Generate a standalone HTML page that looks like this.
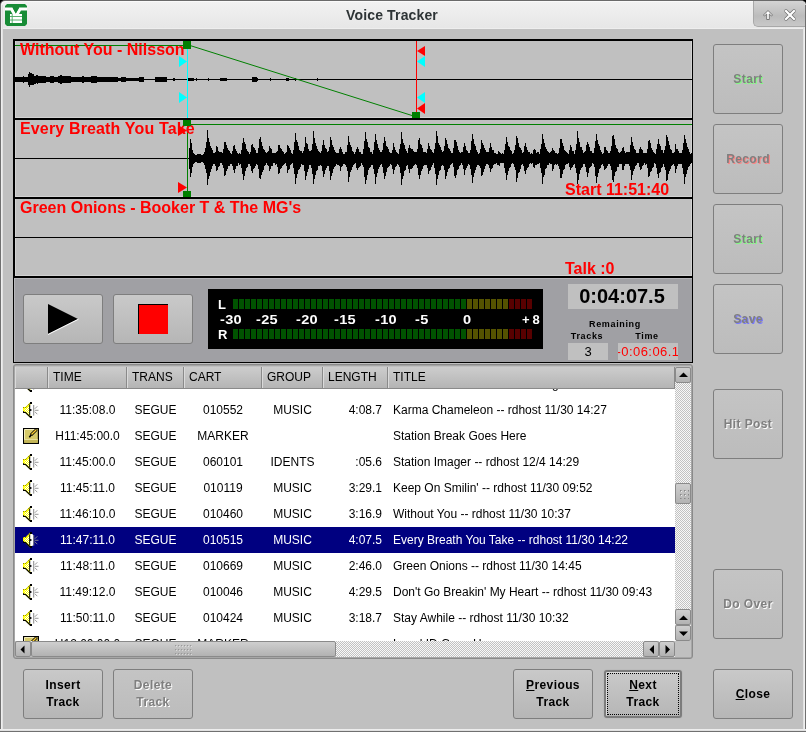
<!DOCTYPE html>
<html><head><meta charset="utf-8">
<style>
*{box-sizing:border-box;margin:0;padding:0}
html,body{width:806px;height:732px;overflow:hidden}
body{position:relative;background:#c0c0c0;font-family:"Liberation Sans",sans-serif;color:#000}
.a{position:absolute}
/* window frame */
#tb{left:0;top:0;width:806px;height:29px;background:linear-gradient(#f2f2f2,#e6e6e6);border-top:1px solid #6a6a6a;border-left:1px solid #707070;border-top-left-radius:5px;border-top-right-radius:5px;box-shadow:inset 1px 1px 0 #fafafa}
#tbl{left:0;top:28px;width:806px;height:1px;background:#eeeeee}
#fl{left:0;top:5px;width:1px;height:732px;background:#707070}
#fl2{left:1px;top:5px;width:2px;height:726px;background:linear-gradient(90deg,#f4f4f4,#dcdcdc)}
#fr{left:805px;top:5px;width:1px;height:732px;background:#707070}
#fr2{left:803px;top:27px;width:2px;height:704px;background:linear-gradient(90deg,#dcdcdc,#f4f4f4)}
#fb{left:0;top:729px;width:806px;height:3px;background:linear-gradient(#f4f4f4,#dcdcdc 60%,#707070 60%)}
#title{left:346px;top:7px;text-align:left;white-space:nowrap;font-weight:bold;font-size:14px;color:#2e3436;letter-spacing:0.15px}
#tab{left:753px;top:1px;width:52px;height:26px;background:linear-gradient(#d4d4d4,#bcbcbc 60%,#c8c8c8);border-bottom-left-radius:5px;border-top-right-radius:4px;border-left:1px solid #a8a8a8;border-bottom:1px solid #a8a8a8}
/* buttons */
.btn{position:absolute;border:1px solid #7e7e7e;border-radius:3px;background:linear-gradient(#c9c9c9,#b6b6b6);font-weight:bold;font-size:12px;text-align:center;color:#000;letter-spacing:0.4px}
.dis{background:linear-gradient(#c4c4c4,#bcbcbc);color:#7f7f7f;letter-spacing:0.4px}
.bl{position:absolute;left:0;width:100%;text-align:center}
.wt{font-weight:bold;font-size:16px;line-height:16px;color:#ff0000;white-space:nowrap}
.mt{color:#fff;font-size:13px;line-height:13px;font-weight:bold;white-space:nowrap;letter-spacing:0}
.mt2{letter-spacing:0.3px;transform:scaleX(1.12);transform-origin:0 0}
.sm{font-size:9px;font-weight:bold;line-height:11px;white-space:nowrap;letter-spacing:0.65px}
.row{position:absolute;left:0;width:660px;height:26px;font-size:12px;line-height:26px;white-space:nowrap}
.row .c{top:0;height:26px;white-space:nowrap;text-align:center}
.sel{background:#000080;color:#fff}
.hd{background:linear-gradient(#cdcdcd,#b3b3b3);border-right:1px solid #8a8a8a;border-left:1px solid #dadada;font-size:12px;line-height:21px;padding-left:4px;white-space:nowrap}
.sb{border:1px solid #8a8a8a;border-radius:2px;background:linear-gradient(#cfcfcf,#b2b2b2)}
.chk{background-color:#e6e6e6;background-image:repeating-conic-gradient(#c2c2c2 0 25%,#f8f8f8 0 50%);background-size:2px 2px}
body *{will-change:transform}
</style></head><body>
<div class="a" style="left:0;top:0;width:5px;height:5px;background:#000"></div><div class="a" style="left:801px;top:0;width:5px;height:5px;background:#000"></div>
<div id="tb" class="a"></div>
<div id="tbl" class="a"></div>
<div id="fl" class="a"></div><div id="fl2" class="a"></div>
<div id="fr" class="a"></div><div id="fr2" class="a"></div>
<div id="fb" class="a"></div>
<div id="title" class="a">Voice Tracker</div>
<div id="tab" class="a"></div>
<svg class="a" style="left:4px;top:3px" width="24" height="24" viewBox="0 0 24 24">
<path d="M3,1H21L23,3V21L21,23H3L1,21V3Z" fill="#188c36"/>
<path d="M1,4.5H8.5L11.8,10.5L15.2,4.5H23V7.5H17L13.5,13.5H10L6.5,7.5H1Z" fill="#fff"/>
<rect x="6" y="11" width="12" height="9" fill="#fff"/>
<path d="M6,13.5H18M6,17H18M8.2,11V20" stroke="#4aa862" stroke-width="0.9"/>
<path d="M8.5,4.5H15.2L11.8,10.5Z" fill="#188c36"/>
</svg>
<svg class="a" style="left:762px;top:9px" width="12" height="12" viewBox="0 0 12 12">
<path d="M6,1.5L10.5,6L9.5,7L7.3,5V10.5H4.7V5L2.5,7L1.5,6Z" fill="#fff" stroke="#6a6a6a" stroke-width="0.9" stroke-linejoin="round"/>
</svg>
<svg class="a" style="left:783px;top:8px" width="14" height="14" viewBox="0 0 14 14">
<path d="M3,3L11,11M11,3L3,11" stroke="#707070" stroke-width="3.6" stroke-linecap="round"/>
<path d="M3,3L11,11M11,3L3,11" stroke="#fff" stroke-width="2.2" stroke-linecap="square"/>
</svg>

<!--WAVE-->
<div class="a" style="left:13px;top:39px;width:680px;height:239px;background:#000"></div>
<div class="a" style="left:15px;top:41px;width:677px;height:77px;background:#c0c0c0;border-left:1px solid #d2d2d2;border-bottom:1px solid #d2d2d2;border-right:1px solid #d2d2d2"></div>
<div class="a" style="left:15px;top:120px;width:677px;height:77px;background:#c0c0c0;border-left:1px solid #d2d2d2;border-bottom:1px solid #d2d2d2;border-right:1px solid #d2d2d2"></div>
<div class="a" style="left:15px;top:199px;width:677px;height:77px;background:#c0c0c0;border-left:1px solid #d2d2d2;border-bottom:1px solid #d2d2d2;border-right:1px solid #d2d2d2"></div>
<svg class="a" style="left:0;top:0" width="806" height="280" viewBox="0 0 806 280" shape-rendering="crispEdges">
<g fill="#000">
<rect x="15" y="79" width="677" height="1"/>
<rect x="15" y="158" width="677" height="1"/>
<rect x="15" y="237" width="677" height="1"/>
<path d="M15,77h1v5h-1ZM16,77h1v5h-1ZM17,77h1v5h-1ZM18,77h1v5h-1ZM19,77h1v5h-1ZM20,77h1v5h-1ZM21,77h1v5h-1ZM22,77h1v5h-1ZM23,76h1v7h-1ZM24,77h1v5h-1ZM25,77h1v5h-1ZM26,77h1v5h-1ZM27,77h1v5h-1ZM28,74h1v11h-1ZM29,72h1v15h-1ZM30,73h1v12h-1ZM31,73h1v12h-1ZM32,74h1v11h-1ZM33,74h1v11h-1ZM34,76h1v8h-1ZM35,76h1v8h-1ZM36,75h1v8h-1ZM37,75h1v9h-1ZM38,76h1v7h-1ZM39,76h1v7h-1ZM40,76h1v7h-1ZM41,76h1v7h-1ZM42,76h1v7h-1ZM43,76h1v7h-1ZM44,76h1v7h-1ZM45,76h1v7h-1ZM46,77h1v5h-1ZM47,77h1v5h-1ZM48,77h1v5h-1ZM49,77h1v5h-1ZM50,76h1v7h-1ZM51,76h1v7h-1ZM52,76h1v7h-1ZM53,76h1v7h-1ZM54,77h1v5h-1ZM55,77h1v5h-1ZM56,77h1v5h-1ZM57,77h1v5h-1ZM58,76h1v7h-1ZM59,76h1v7h-1ZM60,75h1v9h-1ZM61,75h1v9h-1ZM62,76h1v7h-1ZM63,76h1v7h-1ZM64,76h1v7h-1ZM65,76h1v7h-1ZM66,76h1v7h-1ZM67,76h1v7h-1ZM68,76h1v7h-1ZM69,76h1v7h-1ZM70,76h1v7h-1ZM71,77h1v5h-1ZM72,77h1v5h-1ZM73,77h1v5h-1ZM74,77h1v5h-1ZM75,77h1v5h-1ZM76,77h1v5h-1ZM77,77h1v5h-1ZM78,77h1v5h-1ZM79,77h1v5h-1ZM80,77h1v5h-1ZM81,77h1v5h-1ZM82,76h1v7h-1ZM83,76h1v7h-1ZM84,77h1v5h-1ZM85,77h1v5h-1ZM86,77h1v5h-1ZM87,77h1v5h-1ZM88,77h1v5h-1ZM89,77h1v5h-1ZM90,77h1v5h-1ZM91,76h1v7h-1ZM92,76h1v7h-1ZM93,76h1v7h-1ZM94,76h1v7h-1ZM95,76h1v7h-1ZM96,76h1v7h-1ZM97,77h1v5h-1ZM98,77h1v5h-1ZM99,77h1v5h-1ZM100,77h1v5h-1ZM101,77h1v5h-1ZM102,77h1v5h-1ZM103,77h1v5h-1ZM104,77h1v5h-1ZM105,77h1v5h-1ZM106,77h1v5h-1ZM107,77h1v5h-1ZM108,77h1v5h-1ZM109,77h1v5h-1ZM110,77h1v5h-1ZM111,77h1v5h-1ZM112,77h1v5h-1ZM113,77h1v5h-1ZM114,77h1v5h-1ZM115,77h1v5h-1ZM116,77h1v5h-1ZM117,77h1v5h-1ZM118,78h1v3h-1ZM119,78h1v3h-1ZM120,78h1v3h-1ZM121,77h1v5h-1ZM122,77h1v5h-1ZM123,77h1v5h-1ZM124,77h1v5h-1ZM125,77h1v5h-1ZM126,78h1v3h-1ZM127,78h1v3h-1ZM128,78h1v3h-1ZM129,78h1v3h-1ZM130,78h1v3h-1ZM131,78h1v3h-1ZM132,78h1v3h-1ZM133,78h1v3h-1ZM134,78h1v3h-1ZM135,78h1v3h-1ZM136,78h1v3h-1ZM137,78h1v3h-1ZM138,78h1v3h-1ZM139,77h1v5h-1ZM140,77h1v5h-1ZM141,77h1v5h-1ZM142,77h1v5h-1ZM143,77h1v5h-1ZM155,77h1v5h-1ZM156,77h1v5h-1ZM157,77h1v5h-1ZM158,77h1v5h-1ZM159,77h1v5h-1ZM160,77h1v5h-1ZM161,77h1v5h-1ZM162,77h1v5h-1ZM163,77h1v5h-1ZM164,77h1v5h-1ZM165,77h1v5h-1ZM166,77h1v5h-1ZM173,78h1v3h-1ZM174,78h1v3h-1ZM187,78h1v3h-1ZM188,78h1v3h-1ZM189,78h1v3h-1ZM190,78h1v3h-1ZM191,78h1v3h-1ZM192,78h1v3h-1ZM193,78h1v3h-1ZM196,78h1v3h-1ZM208,78h1v3h-1ZM220,78h1v3h-1ZM221,78h1v3h-1ZM222,78h1v3h-1ZM223,78h1v3h-1ZM224,78h1v3h-1ZM225,78h1v3h-1ZM226,78h1v3h-1ZM252,77h1v5h-1ZM253,77h1v5h-1ZM254,77h1v5h-1ZM255,77h1v5h-1ZM256,77h1v5h-1ZM257,78h1v3h-1ZM270,78h1v3h-1ZM286,78h1v3h-1ZM287,78h1v3h-1ZM288,78h1v3h-1ZM295,78h1v3h-1ZM317,78h1v3h-1Z"/>
<path d="M189,148H190V139H191V143H192V150H193V153H194V154H195V155H196V155H197V154H198V154H199V154H200V154H201V155H202V155H203V154H204V152H205V148H206V142H207V130H208V138H209V142H210V146H211V148H212V150H213V153H214V153H215V152H216V146H217V147H218V151H219V152H220V152H221V152H222V153H223V149H224V142H225V142H226V145H227V148H228V150H229V151H230V153H231V154H232V151H233V146H234V145H235V149H236V151H237V153H238V154H239V153H240V154H241V150H242V143H243V138H244V142H245V144H246V149H247V151H248V152H249V154H250V152H251V145H252V144H253V147H254V148H255V150H256V153H257V153H258V148H259V139H260V137H261V142H262V146H263V149H264V150H265V152H266V153H267V152H268V151H269V146H270V148H271V149H272V153H273V153H274V153H275V153H276V152H277V151H278V145H279V145H280V148H281V149H282V151H283V152H284V154H285V153H286V152H287V145H288V146H289V148H290V150H291V153H292V154H293V150H294V142H295V133H296V140H297V142H298V146H299V150H300V151H301V151H302V153H303V151H304V147H305V137H306V143H307V144H308V149H309V151H310V151H311V150H312V144H313V131H314V138H315V143H316V146H317V149H318V151H319V152H320V153H321V151H322V145H323V140H324V145H325V148H326V149H327V152H328V151H329V147H330V137H331V140H332V145H333V147H334V150H335V152H336V153H337V153H338V153H339V149H340V147H341V149H342V152H343V154H344V154H345V152H346V152H347V145H348V136H349V142H350V145H351V147H352V151H353V152H354V154H355V152H356V149H357V147H358V149H359V152H360V152H361V154H362V154H363V149H364V141H365V132H366V139H367V142H368V147H369V148H370V152H371V152H372V154H373V150H374V142H375V134H376V140H377V144H378V148H379V150H380V152H381V152H382V150H383V143H384V137H385V141H386V146H387V147H388V149H389V152H390V153H391V153H392V150H393V143H394V147H395V150H396V152H397V153H398V154H399V149H400V144H401V132H402V139H403V143H404V145H405V149H406V151H407V153H408V148H409V145H410V148H411V149H412V149H413V151H414V152H415V152H416V152H417V149H418V140H419V138H420V144H421V145H422V148H423V152H424V152H425V152H426V153H427V149H428V143H429V146H430V149H431V150H432V152H433V153H434V149H435V143H436V131H437V136H438V143H439V145H440V147H441V150H442V152H443V151H444V146H445V138H446V140H447V144H448V148H449V149H450V151H451V153H452V153H453V148H454V140H455V140H456V142H457V146H458V150H459V152H460V153H461V152H462V152H463V147H464V143H465V146H466V150H467V151H468V153H469V153H470V150H471V141H472V134H473V139H474V144H475V146H476V150H477V152H478V154H479V153H480V149H481V140H482V143H483V145H484V148H485V150H486V152H487V152H488V152H489V148H490V143H491V147H492V150H493V150H494V153H495V153H496V154H497V154H498V151H499V152H500V153H501V154H502V153H503V154H504V150H505V144H506V137H507V142H508V146H509V147H510V150H511V151H512V154H513V153H514V150H515V145H516V136H517V138H518V143H519V147H520V148H521V150H522V153H523V152H524V146H525V143H526V147H527V150H528V152H529V152H530V154H531V153H532V154H533V150H534V149H535V150H536V153H537V152H538V152H539V154H540V149H541V144H542V134H543V139H544V143H545V147H546V149H547V151H548V152H549V153H550V152H551V151H552V148H553V150H554V151H555V153H556V153H557V154H558V153H559V148H560V139H561V139H562V143H563V146H564V150H565V151H566V152H567V153H568V154H569V150H570V145H571V147H572V151H573V151H574V154H575V150H576V144H577V131H578V138H579V142H580V147H581V147H582V150H583V153H584V152H585V151H586V145H587V142H588V144H589V147H590V151H591V151H592V153H593V153H594V148H595V141H596V134H597V140H598V144H599V146H600V150H601V152H602V154H603V153H604V147H605V147H606V150H607V151H608V153H609V153H610V151H611V146H612V136H613V135H614V139H615V145H616V148H617V149H618V152H619V153H620V152H621V151H622V148H623V147H624V151H625V153H626V152H627V152H628V152H629V152H630V145H631V137H632V142H633V146H634V149H635V150H636V153H637V153H638V153H639V149H640V147H641V149H642V150H643V153H644V153H645V153H646V153H647V149H648V141H649V140H650V143H651V148H652V150H653V152H654V153H655V154H656V149H657V144H658V139H659V144H660V146H661V150H662V150H663V153H664V150H665V146H666V135H667V137H668V141H669V145H670V149H671V150H672V153H673V153H674V152H675V144H676V149H677V149H678V151H679V153H680V153H681V153H682V150H683V143H684V135H685V139H686V143H687V147H688V149H689V152H690V154H691V153H692V163H691V164H690V166H689V167H688V170H687V174H686V177H685V184H684V174H683V168H682V164H681V164H680V164H679V164H678V166H677V169H676V173H675V166H674V164H673V165H672V166H671V169H670V171H669V174H668V180H667V181H666V170H665V167H664V164H663V167H662V168H661V172H660V173H659V178H658V174H657V168H656V164H655V163H654V167H653V168H652V171H651V172H650V176H649V177H648V168H647V164H646V165H645V163H644V165H643V166H642V169H641V170H640V167H639V163H638V163H637V165H636V166H635V169H634V171H633V175H632V180H631V170H630V166H629V164H628V164H627V164H626V164H625V166H624V170H623V170H622V164H621V164H620V164H619V167H618V167H617V171H616V172H615V176H614V182H613V180H612V170H611V166H610V164H609V164H608V166H607V168H606V169H605V170H604V166H603V164H602V165H601V168H600V169H599V173H598V177H597V183H596V176H595V167H594V164H593V163H592V166H591V167H590V168H589V173H588V177H587V172H586V167H585V164H584V164H583V167H582V168H581V170H580V174H579V180H578V184H577V173H576V168H575V164H574V165H573V167H572V168H571V170H570V167H569V163H568V164H567V164H566V165H565V169H564V170H563V174H562V178H561V178H560V169H559V166H558V164H557V165H556V164H555V165H554V169H553V171H552V164H551V164H550V163H549V165H548V165H547V168H546V169H545V175H544V177H543V184H542V173H541V168H540V163H539V164H538V164H537V165H536V165H535V168H534V167H533V163H532V164H531V163H530V164H529V167H528V168H527V170H526V174H525V171H524V166H523V164H522V165H521V169H520V172H519V173H518V178H517V182H516V170H515V167H514V164H513V163H512V164H511V167H510V168H509V171H508V175H507V180H506V173H505V168H504V163H503V163H502V163H501V163H500V166H499V165H498V165H497V163H496V164H495V164H494V165H493V168H492V169H491V172H490V168H489V165H488V164H487V164H486V166H485V169H484V172H483V175H482V176H481V168H480V166H479V165H478V165H477V167H476V170H475V173H474V177H473V183H472V175H471V169H470V165H469V164H468V166H467V168H466V170H465V175H464V169H463V165H462V163H461V165H460V166H459V169H458V170H457V175H456V178H455V176H454V167H453V163H452V164H451V165H450V168H449V169H448V172H447V176H446V179H445V170H444V166H443V165H442V166H441V170H440V171H439V175H438V179H437V185H436V174H435V168H434V163H433V165H432V167H431V170H430V171H429V174H428V168H427V165H426V165H425V165H424V166H423V169H422V171H421V175H420V179H419V175H418V168H417V165H416V164H415V165H414V166H413V168H412V169H411V169H410V173H409V169H408V165H407V166H406V170H405V171H404V176H403V179H402V185H401V173H400V167H399V165H398V164H397V166H396V167H395V170H394V174H393V169H392V165H391V164H390V166H389V167H388V168H387V172H386V176H385V179H384V173H383V167H382V164H381V165H380V167H379V169H378V173H377V177H376V184H375V174H374V169H373V165H372V165H371V167H370V168H369V170H368V175H367V180H366V184H365V177H364V167H363V165H362V163H361V166H360V167H359V168H358V170H357V168H356V163H355V164H354V165H353V167H352V170H351V172H350V177H349V182H348V171H347V167H346V165H345V164H344V164H343V166H342V167H341V171H340V166H339V165H338V165H337V164H336V166H335V167H334V169H333V173H332V176H331V180H330V171H329V166H328V166H327V168H326V170H325V174H324V177H323V171H322V166H321V165H320V166H319V166H318V170H317V171H316V175H315V179H314V184H313V174H312V168H311V165H310V165H309V169H308V172H307V176H306V180H305V171H304V165H303V165H302V164H301V167H300V169H299V170H298V174H297V178H296V184H295V174H294V168H293V163H292V164H291V165H290V169H289V170H288V173H287V166H286V163H285V164H284V165H283V166H282V168H281V169H280V173H279V174H278V167H277V164H276V165H275V163H274V163H273V166H272V166H271V169H270V171H269V166H268V165H267V163H266V165H265V166H264V170H263V172H262V175H261V179H260V178H259V169H258V165H257V164H256V166H255V168H254V169H253V173H252V171H251V166H250V164H249V164H248V167H247V168H246V171H245V176H244V180H243V174H242V168H241V164H240V165H239V163H238V166H237V166H236V169H235V173H234V170H233V166H232V164H231V164H230V166H229V166H228V169H227V171H226V175H225V176H224V168H223V165H222V163H221V163H220V166H219V167H218V170H217V171H216V166H215V164H214V164H213V166H212V169H211V172H210V176H209V179H208V185H207V173H206V169H205V165H204V163H203V162H202V162H201V163H200V163H199V163H198V163H197V162H196V162H195V163H194V164H193V167H192V173H191V177H190V169H189Z"/>
</g>
<g fill="#008000">
<rect x="15" y="45" width="168" height="1"/>
<rect x="187" y="120" width="1" height="76"/>
<rect x="190" y="124" width="502" height="1"/>
</g>
<path d="M190,45.5 L412,115.5" stroke="#008000" stroke-width="1" fill="none" shape-rendering="auto"/>
</svg>
<div class="a wt" style="left:20px;top:42px;letter-spacing:0px">Without You - Nilsson</div>
<div class="a wt" style="left:20px;top:121px;letter-spacing:0.15px">Every Breath You Take</div>
<div class="a wt" style="left:20px;top:200px">Green Onions - Booker T &amp; The MG's</div>
<div class="a wt" style="left:565px;top:182px">Start 11:51:40</div>
<div class="a wt" style="left:565px;top:261px">Talk :0</div>
<svg class="a" style="left:0;top:0" width="806" height="280" viewBox="0 0 806 280" shape-rendering="crispEdges">
<rect x="187" y="41" width="1" height="77" fill="#00ffff"/>
<rect x="416" y="41" width="1" height="77" fill="#ff0000"/>
<g fill="#008000">
<rect x="183" y="41" width="8" height="8"/>
<rect x="412" y="112" width="8" height="6"/>
<rect x="183" y="120" width="8" height="6"/>
<rect x="183" y="191" width="8" height="6"/>
</g>
<g shape-rendering="auto">
<path d="M179,56 L187,61.5 L179,67Z" fill="#00ffff"/>
<path d="M179,92 L187,97.5 L179,103Z" fill="#00ffff"/>
<path d="M425,46 L417,51 L425,56Z" fill="#ff0000"/>
<path d="M425,56 L417,61.5 L425,67Z" fill="#00ffff"/>
<path d="M425,92 L417,97.5 L425,103Z" fill="#00ffff"/>
<path d="M425,103 L417,108.5 L425,114Z" fill="#ff0000"/>
<path d="M178,125 L187,130.5 L178,136Z" fill="#ff0000"/>
<path d="M178,182 L187,187.5 L178,193Z" fill="#ff0000"/>
</g>
</svg>
<!--TRANSPORT-->
<div class="a" style="left:13px;top:278px;width:680px;height:85px;background:#000"></div>
<div class="a" style="left:14px;top:278px;width:678px;height:84px;background:#a0a0a4;border-left:1px solid #b6b6ba;border-top:1px solid #b6b6ba"></div>
<div class="btn" style="left:23px;top:294px;width:80px;height:50px"></div>
<div class="btn" style="left:113px;top:294px;width:80px;height:50px"></div>
<svg class="a" style="left:0;top:0" width="806" height="362" viewBox="0 0 806 362">
<path d="M48,304 L78,319 L48,334Z" fill="#000"/>
<path d="M48,334.5 L78.5,319.2" stroke="#fff" stroke-width="1" fill="none"/>
<g shape-rendering="crispEdges">
<rect x="138" y="304" width="30" height="30" fill="#000"/>
<rect x="139" y="305" width="29" height="29" fill="#ff0000"/>
<rect x="208" y="289" width="335" height="60" fill="#000"/>
<rect x="233" y="299" width="5" height="10" fill="#005300"/><rect x="233" y="329" width="5" height="10" fill="#005300"/><rect x="239" y="299" width="5" height="10" fill="#005300"/><rect x="239" y="329" width="5" height="10" fill="#005300"/><rect x="245" y="299" width="5" height="10" fill="#005300"/><rect x="245" y="329" width="5" height="10" fill="#005300"/><rect x="251" y="299" width="5" height="10" fill="#005300"/><rect x="251" y="329" width="5" height="10" fill="#005300"/><rect x="257" y="299" width="5" height="10" fill="#005300"/><rect x="257" y="329" width="5" height="10" fill="#005300"/><rect x="263" y="299" width="5" height="10" fill="#005300"/><rect x="263" y="329" width="5" height="10" fill="#005300"/><rect x="269" y="299" width="5" height="10" fill="#005300"/><rect x="269" y="329" width="5" height="10" fill="#005300"/><rect x="275" y="299" width="5" height="10" fill="#005300"/><rect x="275" y="329" width="5" height="10" fill="#005300"/><rect x="281" y="299" width="5" height="10" fill="#005300"/><rect x="281" y="329" width="5" height="10" fill="#005300"/><rect x="287" y="299" width="5" height="10" fill="#005300"/><rect x="287" y="329" width="5" height="10" fill="#005300"/><rect x="293" y="299" width="5" height="10" fill="#005300"/><rect x="293" y="329" width="5" height="10" fill="#005300"/><rect x="299" y="299" width="5" height="10" fill="#005300"/><rect x="299" y="329" width="5" height="10" fill="#005300"/><rect x="305" y="299" width="5" height="10" fill="#005300"/><rect x="305" y="329" width="5" height="10" fill="#005300"/><rect x="311" y="299" width="5" height="10" fill="#005300"/><rect x="311" y="329" width="5" height="10" fill="#005300"/><rect x="317" y="299" width="5" height="10" fill="#005300"/><rect x="317" y="329" width="5" height="10" fill="#005300"/><rect x="323" y="299" width="5" height="10" fill="#005300"/><rect x="323" y="329" width="5" height="10" fill="#005300"/><rect x="329" y="299" width="5" height="10" fill="#005300"/><rect x="329" y="329" width="5" height="10" fill="#005300"/><rect x="335" y="299" width="5" height="10" fill="#005300"/><rect x="335" y="329" width="5" height="10" fill="#005300"/><rect x="341" y="299" width="5" height="10" fill="#005300"/><rect x="341" y="329" width="5" height="10" fill="#005300"/><rect x="347" y="299" width="5" height="10" fill="#005300"/><rect x="347" y="329" width="5" height="10" fill="#005300"/><rect x="353" y="299" width="5" height="10" fill="#005300"/><rect x="353" y="329" width="5" height="10" fill="#005300"/><rect x="359" y="299" width="5" height="10" fill="#005300"/><rect x="359" y="329" width="5" height="10" fill="#005300"/><rect x="365" y="299" width="5" height="10" fill="#005300"/><rect x="365" y="329" width="5" height="10" fill="#005300"/><rect x="371" y="299" width="5" height="10" fill="#005300"/><rect x="371" y="329" width="5" height="10" fill="#005300"/><rect x="377" y="299" width="5" height="10" fill="#005300"/><rect x="377" y="329" width="5" height="10" fill="#005300"/><rect x="383" y="299" width="5" height="10" fill="#005300"/><rect x="383" y="329" width="5" height="10" fill="#005300"/><rect x="389" y="299" width="5" height="10" fill="#005300"/><rect x="389" y="329" width="5" height="10" fill="#005300"/><rect x="395" y="299" width="5" height="10" fill="#005300"/><rect x="395" y="329" width="5" height="10" fill="#005300"/><rect x="401" y="299" width="5" height="10" fill="#005300"/><rect x="401" y="329" width="5" height="10" fill="#005300"/><rect x="407" y="299" width="5" height="10" fill="#005300"/><rect x="407" y="329" width="5" height="10" fill="#005300"/><rect x="413" y="299" width="5" height="10" fill="#005300"/><rect x="413" y="329" width="5" height="10" fill="#005300"/><rect x="419" y="299" width="5" height="10" fill="#005300"/><rect x="419" y="329" width="5" height="10" fill="#005300"/><rect x="425" y="299" width="5" height="10" fill="#005300"/><rect x="425" y="329" width="5" height="10" fill="#005300"/><rect x="431" y="299" width="5" height="10" fill="#005300"/><rect x="431" y="329" width="5" height="10" fill="#005300"/><rect x="437" y="299" width="5" height="10" fill="#005300"/><rect x="437" y="329" width="5" height="10" fill="#005300"/><rect x="443" y="299" width="5" height="10" fill="#005300"/><rect x="443" y="329" width="5" height="10" fill="#005300"/><rect x="449" y="299" width="5" height="10" fill="#005300"/><rect x="449" y="329" width="5" height="10" fill="#005300"/><rect x="455" y="299" width="5" height="10" fill="#005300"/><rect x="455" y="329" width="5" height="10" fill="#005300"/><rect x="461" y="299" width="5" height="10" fill="#005300"/><rect x="461" y="329" width="5" height="10" fill="#005300"/><rect x="467" y="299" width="5" height="10" fill="#555300"/><rect x="467" y="329" width="5" height="10" fill="#555300"/><rect x="473" y="299" width="5" height="10" fill="#555300"/><rect x="473" y="329" width="5" height="10" fill="#555300"/><rect x="479" y="299" width="5" height="10" fill="#555300"/><rect x="479" y="329" width="5" height="10" fill="#555300"/><rect x="485" y="299" width="5" height="10" fill="#555300"/><rect x="485" y="329" width="5" height="10" fill="#555300"/><rect x="491" y="299" width="5" height="10" fill="#555300"/><rect x="491" y="329" width="5" height="10" fill="#555300"/><rect x="497" y="299" width="5" height="10" fill="#555300"/><rect x="497" y="329" width="5" height="10" fill="#555300"/><rect x="503" y="299" width="5" height="10" fill="#555300"/><rect x="503" y="329" width="5" height="10" fill="#555300"/><rect x="509" y="299" width="5" height="10" fill="#580000"/><rect x="509" y="329" width="5" height="10" fill="#580000"/><rect x="515" y="299" width="5" height="10" fill="#580000"/><rect x="515" y="329" width="5" height="10" fill="#580000"/><rect x="521" y="299" width="5" height="10" fill="#580000"/><rect x="521" y="329" width="5" height="10" fill="#580000"/><rect x="527" y="299" width="5" height="10" fill="#580000"/><rect x="527" y="329" width="5" height="10" fill="#580000"/>
</g>
</svg>
<div class="a mt" style="left:218px;top:298px">L</div>
<div class="a mt" style="left:218px;top:328px">R</div>
<div class="a mt mt2" style="left:220px;top:313px">-30</div>
<div class="a mt mt2" style="left:256px;top:313px">-25</div>
<div class="a mt mt2" style="left:296px;top:313px">-20</div>
<div class="a mt mt2" style="left:334px;top:313px">-15</div>
<div class="a mt mt2" style="left:375px;top:313px">-10</div>
<div class="a mt mt2" style="left:415px;top:313px">-5</div>
<div class="a mt mt2" style="left:463px;top:313px">0</div>
<div class="a mt" style="left:522px;top:313px;letter-spacing:3px">+8</div>
<div class="a" style="left:568px;top:284px;width:110px;height:25px;background:#c0c0c0"></div>
<div class="a" style="left:567px;top:284px;width:110px;height:25px;text-align:center;font-weight:bold;font-size:20px;line-height:25px">0:04:07.5</div>
<div class="a sm" style="left:560px;top:319px;width:110px;text-align:center">Remaining</div>
<div class="a sm" style="left:567px;top:331px;width:40px;text-align:center">Tracks</div>
<div class="a sm" style="left:617px;top:331px;width:60px;text-align:center">Time</div>
<div class="a" style="left:568px;top:343px;width:40px;height:17px;background:#c0c0c0;text-align:center;font-size:13px;line-height:17px">3</div>
<div class="a" style="left:618px;top:343px;width:60px;height:17px;background:#c0c0c0;overflow:hidden"><div class="a" style="left:-10px;width:80px;text-align:center;font-size:13px;letter-spacing:0.45px;line-height:17px;color:#ff0000">-0:06:06.1</div></div>
<!--LIST-->
<svg width="0" height="0" style="position:absolute">
<defs>
<symbol id="spk" viewBox="0 0 16 16">
<path d="M0,5H2.5L7.5,0H9V16H7.5L2.5,11H0Z" fill="#ffff00"/>
<path d="M1.5,6.3H3.2L6.2,3.2V12.8L3.2,9.8H1.5Z" fill="url(#chk2)"/>
<path d="M6.6,3L8.6,1.8L10,2.6V13.4L8.6,14.2L6.6,13Z" fill="#fff"/>
<path d="M0.6,9.2V10.5H2.6L7.6,15.4H9" stroke="#000" stroke-width="1.2" fill="none"/>
<path d="M0.5,6V5.5H2.5L7.5,0.6" stroke="#5a5400" stroke-width="0.9" stroke-dasharray="1 1" fill="none"/>
<rect x="7" y="0" width="2" height="2" fill="#000"/>
<rect x="7" y="14" width="2" height="2" fill="#000"/>
<rect x="6.2" y="2.5" width="1" height="11" fill="#000"/>
<ellipse cx="7.6" cy="8" rx="1" ry="1.1" fill="#000"/>
<rect x="10.2" y="3" width="1" height="10.6" fill="#8c8c8c"/>
<path d="M11.8,6.8L14.3,4.3M11.8,8.3H15.5M11.8,9.7L14.3,12.2" stroke="#8c8c8c" stroke-width="0.9"/>
</symbol>
<pattern id="chk2" width="2" height="2" patternUnits="userSpaceOnUse"><rect width="2" height="2" fill="#ffff00"/><rect width="1" height="1" fill="#fff"/><rect x="1" y="1" width="1" height="1" fill="#fff"/></pattern>
<symbol id="note" viewBox="0 0 16 16">
<rect x="0.6" y="0.6" width="14.8" height="14.8" fill="#d6ca6a" stroke="#000" stroke-width="1.2"/>
<path d="M1.5,12.5V1.5H12" stroke="#f4eebc" stroke-width="1" fill="none"/>
<rect x="1.2" y="11.5" width="13.6" height="3.3" fill="#c4b658"/>
<path d="M1.2,11.5H14.8" stroke="#eee6a8" stroke-width="0.8"/>
<path d="M13.5,1.5L8,7" stroke="#000" stroke-width="3"/>
<path d="M13.3,1.7L8.2,6.8" stroke="#ffd030" stroke-width="1.3"/>
<path d="M8.5,6.5L6.8,8.6L7.4,9.2" stroke="#000" stroke-width="1.6" fill="none"/>
</symbol>
</defs></svg>
<div class="a" style="left:13px;top:364px;width:680px;height:295px;border:1px solid #8a8a8a;border-radius:3px;background:#a6a6a6"></div>
<div class="a" style="left:15px;top:366px;width:676px;height:291px;background:#c0c0c0"></div>
<div class="a" style="left:15px;top:389px;width:660px;height:252px;overflow:hidden;background:#fff">
<div class="row" style="top:-18px"><svg class="a" style="left:8px;top:5px" width="16" height="16"><use href="#spk"/></svg><div class="a c" style="left:537px;text-align:left">g</div></div>
<div class="row" style="top:8px"><svg class="a" style="left:8px;top:5px" width="16" height="16"><use href="#spk"/></svg><div class="a c" style="left:33px;width:79px">11:35:08.0</div><div class="a c" style="left:112px;width:57px">SEGUE</div><div class="a c" style="left:169px;width:78px">010552</div><div class="a c" style="left:247px;width:61px">MUSIC</div><div class="a c" style="left:308px;width:59px;text-align:right">4:08.7</div><div class="a c" style="left:378px;text-align:left">Karma Chameleon -- rdhost 11/30 14:27</div></div>
<div class="row" style="top:34px"><svg class="a" style="left:8px;top:5px" width="16" height="16"><use href="#note"/></svg><div class="a c" style="left:33px;width:79px">H11:45:00.0</div><div class="a c" style="left:112px;width:57px">SEGUE</div><div class="a c" style="left:169px;width:78px">MARKER</div><div class="a c" style="left:378px;text-align:left">Station Break Goes Here</div></div>
<div class="row" style="top:60px"><svg class="a" style="left:8px;top:5px" width="16" height="16"><use href="#spk"/></svg><div class="a c" style="left:33px;width:79px">11:45:00.0</div><div class="a c" style="left:112px;width:57px">SEGUE</div><div class="a c" style="left:169px;width:78px">060101</div><div class="a c" style="left:247px;width:61px">IDENTS</div><div class="a c" style="left:308px;width:59px;text-align:right">:05.6</div><div class="a c" style="left:378px;text-align:left">Station Imager -- rdhost 12/4 14:29</div></div>
<div class="row" style="top:86px"><svg class="a" style="left:8px;top:5px" width="16" height="16"><use href="#spk"/></svg><div class="a c" style="left:33px;width:79px">11:45:11.0</div><div class="a c" style="left:112px;width:57px">SEGUE</div><div class="a c" style="left:169px;width:78px">010119</div><div class="a c" style="left:247px;width:61px">MUSIC</div><div class="a c" style="left:308px;width:59px;text-align:right">3:29.1</div><div class="a c" style="left:378px;text-align:left">Keep On Smilin' -- rdhost 11/30 09:52</div></div>
<div class="row" style="top:112px"><svg class="a" style="left:8px;top:5px" width="16" height="16"><use href="#spk"/></svg><div class="a c" style="left:33px;width:79px">11:46:10.0</div><div class="a c" style="left:112px;width:57px">SEGUE</div><div class="a c" style="left:169px;width:78px">010460</div><div class="a c" style="left:247px;width:61px">MUSIC</div><div class="a c" style="left:308px;width:59px;text-align:right">3:16.9</div><div class="a c" style="left:378px;text-align:left">Without You -- rdhost 11/30 10:37</div></div>
<div class="row sel" style="top:138px"><svg class="a" style="left:8px;top:5px" width="16" height="16"><use href="#spk"/></svg><div class="a c" style="left:33px;width:79px">11:47:11.0</div><div class="a c" style="left:112px;width:57px">SEGUE</div><div class="a c" style="left:169px;width:78px">010515</div><div class="a c" style="left:247px;width:61px">MUSIC</div><div class="a c" style="left:308px;width:59px;text-align:right">4:07.5</div><div class="a c" style="left:378px;text-align:left">Every Breath You Take -- rdhost 11/30 14:22</div></div>
<div class="row" style="top:164px"><svg class="a" style="left:8px;top:5px" width="16" height="16"><use href="#spk"/></svg><div class="a c" style="left:33px;width:79px">11:48:11.0</div><div class="a c" style="left:112px;width:57px">SEGUE</div><div class="a c" style="left:169px;width:78px">010669</div><div class="a c" style="left:247px;width:61px">MUSIC</div><div class="a c" style="left:308px;width:59px;text-align:right">2:46.0</div><div class="a c" style="left:378px;text-align:left">Green Onions -- rdhost 11/30 14:45</div></div>
<div class="row" style="top:190px"><svg class="a" style="left:8px;top:5px" width="16" height="16"><use href="#spk"/></svg><div class="a c" style="left:33px;width:79px">11:49:12.0</div><div class="a c" style="left:112px;width:57px">SEGUE</div><div class="a c" style="left:169px;width:78px">010046</div><div class="a c" style="left:247px;width:61px">MUSIC</div><div class="a c" style="left:308px;width:59px;text-align:right">4:29.5</div><div class="a c" style="left:378px;text-align:left">Don't Go Breakin' My Heart -- rdhost 11/30 09:43</div></div>
<div class="row" style="top:216px"><svg class="a" style="left:8px;top:5px" width="16" height="16"><use href="#spk"/></svg><div class="a c" style="left:33px;width:79px">11:50:11.0</div><div class="a c" style="left:112px;width:57px">SEGUE</div><div class="a c" style="left:169px;width:78px">010424</div><div class="a c" style="left:247px;width:61px">MUSIC</div><div class="a c" style="left:308px;width:59px;text-align:right">3:18.7</div><div class="a c" style="left:378px;text-align:left">Stay Awhile -- rdhost 11/30 10:32</div></div>
<div class="row" style="top:242px"><svg class="a" style="left:8px;top:5px" width="16" height="16"><use href="#note"/></svg><div class="a c" style="left:33px;width:79px">H12:00:00.0</div><div class="a c" style="left:112px;width:57px">SEGUE</div><div class="a c" style="left:169px;width:78px">MARKER</div><div class="a c" style="left:378px;text-align:left">Legal ID Goes Here</div></div>
</div>
<div class="a hd" style="left:15px;top:367px;width:33px;height:22px"></div>
<div class="a hd" style="left:48px;top:367px;width:79px;height:22px">TIME</div>
<div class="a hd" style="left:127px;top:367px;width:57px;height:22px">TRANS</div>
<div class="a hd" style="left:184px;top:367px;width:78px;height:22px">CART</div>
<div class="a hd" style="left:262px;top:367px;width:61px;height:22px">GROUP</div>
<div class="a hd" style="left:323px;top:367px;width:65px;height:22px">LENGTH</div>
<div class="a hd" style="left:388px;top:367px;width:287px;height:22px">TITLE</div>
<div class="a" style="left:15px;top:388px;width:660px;height:1px;background:#8a8a8a"></div>
<div class="a chk" style="left:675px;top:382px;width:16px;height:259px"></div>
<div class="a sb" style="left:675px;top:367px;width:16px;height:16px"><svg class="a" style="left:3px;top:4px" width="9" height="6"><path d="M0,5h9L4.5,0.5Z" fill="#000"/></svg></div>
<div class="a sb" style="left:675px;top:483px;width:16px;height:21px"><svg class="a" style="left:3px;top:5px" width="10" height="10"><rect x="1" y="1" width="1.5" height="1.5" fill="#888"/><rect x="2" y="2" width="1" height="1" fill="#eee"/><rect x="1" y="5" width="1.5" height="1.5" fill="#888"/><rect x="2" y="6" width="1" height="1" fill="#eee"/><rect x="1" y="9" width="1.5" height="1.5" fill="#888"/><rect x="2" y="10" width="1" height="1" fill="#eee"/><rect x="5" y="1" width="1.5" height="1.5" fill="#888"/><rect x="6" y="2" width="1" height="1" fill="#eee"/><rect x="5" y="5" width="1.5" height="1.5" fill="#888"/><rect x="6" y="6" width="1" height="1" fill="#eee"/><rect x="5" y="9" width="1.5" height="1.5" fill="#888"/><rect x="6" y="10" width="1" height="1" fill="#eee"/><rect x="9" y="1" width="1.5" height="1.5" fill="#888"/><rect x="10" y="2" width="1" height="1" fill="#eee"/><rect x="9" y="5" width="1.5" height="1.5" fill="#888"/><rect x="10" y="6" width="1" height="1" fill="#eee"/><rect x="9" y="9" width="1.5" height="1.5" fill="#888"/><rect x="10" y="10" width="1" height="1" fill="#eee"/></svg></div>
<div class="a sb" style="left:675px;top:609px;width:16px;height:16px"><svg class="a" style="left:3px;top:5px" width="9" height="6"><path d="M0,5h9L4.5,0.5Z" fill="#000"/></svg></div>
<div class="a sb" style="left:675px;top:625px;width:16px;height:16px"><svg class="a" style="left:3px;top:5px" width="9" height="6"><path d="M0,0.5h9L4.5,5Z" fill="#000"/></svg></div>
<div class="a chk" style="left:31px;top:641px;width:644px;height:16px"></div>
<div class="a" style="left:675px;top:641px;width:16px;height:16px;background:#c0c0c0"></div>
<div class="a sb" style="left:15px;top:641px;width:16px;height:16px"><svg class="a" style="left:4px;top:3px" width="6" height="9"><path d="M4.5,0.5v8L0.5,4.5Z" fill="#000"/></svg></div>
<div class="a sb" style="left:31px;top:641px;width:305px;height:16px"><svg class="a" style="left:142px;top:2px" width="20" height="12"><rect x="1" y="1" width="1.2" height="1.2" fill="#999"/><rect x="2" y="2" width="0.8" height="0.8" fill="#eee"/><rect x="1" y="5" width="1.2" height="1.2" fill="#999"/><rect x="2" y="6" width="0.8" height="0.8" fill="#eee"/><rect x="1" y="9" width="1.2" height="1.2" fill="#999"/><rect x="2" y="10" width="0.8" height="0.8" fill="#eee"/><rect x="4" y="1" width="1.2" height="1.2" fill="#999"/><rect x="5" y="2" width="0.8" height="0.8" fill="#eee"/><rect x="4" y="5" width="1.2" height="1.2" fill="#999"/><rect x="5" y="6" width="0.8" height="0.8" fill="#eee"/><rect x="4" y="9" width="1.2" height="1.2" fill="#999"/><rect x="5" y="10" width="0.8" height="0.8" fill="#eee"/><rect x="7" y="1" width="1.2" height="1.2" fill="#999"/><rect x="8" y="2" width="0.8" height="0.8" fill="#eee"/><rect x="7" y="5" width="1.2" height="1.2" fill="#999"/><rect x="8" y="6" width="0.8" height="0.8" fill="#eee"/><rect x="7" y="9" width="1.2" height="1.2" fill="#999"/><rect x="8" y="10" width="0.8" height="0.8" fill="#eee"/><rect x="10" y="1" width="1.2" height="1.2" fill="#999"/><rect x="11" y="2" width="0.8" height="0.8" fill="#eee"/><rect x="10" y="5" width="1.2" height="1.2" fill="#999"/><rect x="11" y="6" width="0.8" height="0.8" fill="#eee"/><rect x="10" y="9" width="1.2" height="1.2" fill="#999"/><rect x="11" y="10" width="0.8" height="0.8" fill="#eee"/><rect x="13" y="1" width="1.2" height="1.2" fill="#999"/><rect x="14" y="2" width="0.8" height="0.8" fill="#eee"/><rect x="13" y="5" width="1.2" height="1.2" fill="#999"/><rect x="14" y="6" width="0.8" height="0.8" fill="#eee"/><rect x="13" y="9" width="1.2" height="1.2" fill="#999"/><rect x="14" y="10" width="0.8" height="0.8" fill="#eee"/><rect x="16" y="1" width="1.2" height="1.2" fill="#999"/><rect x="17" y="2" width="0.8" height="0.8" fill="#eee"/><rect x="16" y="5" width="1.2" height="1.2" fill="#999"/><rect x="17" y="6" width="0.8" height="0.8" fill="#eee"/><rect x="16" y="9" width="1.2" height="1.2" fill="#999"/><rect x="17" y="10" width="0.8" height="0.8" fill="#eee"/></svg></div>
<div class="a sb" style="left:643px;top:641px;width:16px;height:16px"><svg class="a" style="left:5px;top:3px" width="6" height="9"><path d="M5,0v9L0.5,4.5Z" fill="#000"/></svg></div>
<div class="a sb" style="left:659px;top:641px;width:16px;height:16px"><svg class="a" style="left:5px;top:3px" width="6" height="9"><path d="M0.5,0v9L5,4.5Z" fill="#000"/></svg></div>
<!--BUTTONS-->
<div class="btn dis" style="left:713px;top:44px;width:70px;height:70px;line-height:68px;text-shadow:1px 1px 0 #80ff80">Start</div>
<div class="btn dis" style="left:713px;top:124px;width:70px;height:70px;line-height:68px;text-shadow:1px 1px 0 #ff8080">Record</div>
<div class="btn dis" style="left:713px;top:204px;width:70px;height:70px;line-height:68px;text-shadow:1px 1px 0 #80ff80">Start</div>
<div class="btn dis" style="left:713px;top:284px;width:70px;height:70px;line-height:68px;text-shadow:1px 1px 0 #7878ff">Save</div>
<div class="btn dis" style="left:713px;top:389px;width:70px;height:70px;line-height:68px;text-shadow:1px 1px 0 #ffffff">Hit Post</div>
<div class="btn dis" style="left:713px;top:569px;width:70px;height:70px;line-height:68px;text-shadow:1px 1px 0 #ffffff">Do Over</div>
<div class="btn" style="left:713px;top:669px;width:80px;height:50px;line-height:48px"><u>C</u>lose</div>
<div class="btn" style="left:23px;top:669px;width:80px;height:50px;padding-top:7px;line-height:16.5px">Insert<br>Track</div>
<div class="btn dis" style="left:113px;top:669px;width:80px;height:50px;padding-top:7px;line-height:16.5px;text-shadow:1px 1px 0 #fff">Delete<br>Track</div>
<div class="btn" style="left:513px;top:669px;width:80px;height:50px;padding-top:7px;line-height:16.5px"><u>P</u>revious<br>Track</div>
<div class="btn" style="left:604px;top:670px;width:78px;height:48px;padding-top:5px;line-height:16.5px;border:2px solid #7c7c7c;box-shadow:inset 1px 1px 0 #dcdcdc,0 0 1px #909090"><div class="a" style="left:1px;top:1px;right:1px;bottom:1px;border:1px dotted #000"></div><u>N</u>ext<br>Track</div>
</body></html>
